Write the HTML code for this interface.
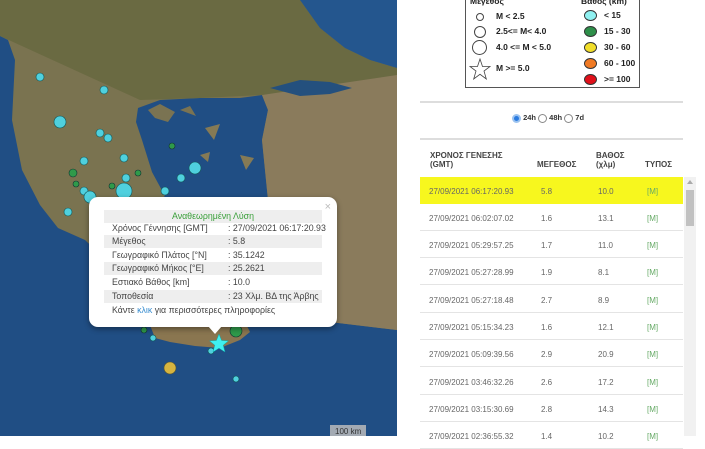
<!DOCTYPE html>
<html><head><meta charset="utf-8"><style>
*{margin:0;padding:0;box-sizing:border-box}
body{width:705px;height:436px;overflow:hidden;background:#fff;font-family:"Liberation Sans","DejaVu Sans",sans-serif;position:relative}
#map{position:absolute;left:0;top:0;width:397px;height:436px;overflow:hidden;background:#1d4a7e}
.pop{position:absolute;left:89px;top:197px;width:248px;height:130px;background:#fff;border-radius:9px;box-shadow:0 2px 6px rgba(0,0,0,.4);font-size:8.8px;color:#444;white-space:nowrap}
.pop .r{position:absolute;left:15px;width:218px;height:13px;line-height:13px}
.pop .g{background:#eee}
.pop .l{position:absolute;left:8px}
.pop .v{position:absolute;left:124px}
.tail{position:absolute;left:208px;top:326px;width:0;height:0;border-left:7px solid transparent;border-right:7px solid transparent;border-top:8px solid #fff}
.r2{position:absolute;font-size:8px;color:#555}
.row{position:absolute;left:420px;width:263px;height:27px;border-bottom:1px solid #e4e4e4;font-size:8px;color:#666}
.row span{position:absolute;top:10px}
</style></head><body>
<div id="map">
<svg width="397" height="436" viewBox="0 0 397 436">
<rect width="397" height="436" fill="#204e84"/>
<path d="M0 0H397V330L330 322L300 300L285 260L275 230L268 200L265 170L262 140L268 110L262 95L240 98L200 98L160 100L138 108L136 122L142 140L152 172L165 196L150 205L130 215L120 235L108 262L85 240L58 228L40 205L22 170L12 120L15 60L8 40L0 36Z" fill="#7a7350"/>
<path d="M262 95L397 70L397 330L330 322L300 300L285 260L275 230L268 200L265 170L262 140L268 110Z" fill="#8a7b5c"/>
<path d="M0 0H300L320 28L345 48L370 60L397 68V75L262 95L200 98L140 100L0 36Z" fill="#6a6a42"/>
<path d="M300 0H397V68L370 60L345 48L320 28Z" fill="#24568e"/>
<path d="M270 88L300 80L330 82L352 88L330 94L300 96Z" fill="#24507e"/>
<path d="M148 110L160 104L175 112L168 122L155 118Z M180 110L190 106L196 116Z" fill="#7a7352"/>
<path d="M205 128L220 124L214 140Z M240 155L254 158L246 170Z M200 155L210 152L208 162Z" fill="#857a55"/>
<path d="M150 325L175 318L200 320L225 318L245 322L250 332L240 340L220 348L195 346L170 342L155 338Z" fill="#8a7650"/>
<path d="M330 425H366V436H330Z" fill="#bbb" opacity=".85"/>
<text x="335" y="434" font-size="8" fill="#333" font-family="Liberation Sans">100 km</text>
<g stroke="#155" stroke-width=".6" fill="#4fd0de">
<circle cx="40" cy="77" r="4"/><circle cx="104" cy="90" r="4"/><circle cx="60" cy="122" r="6"/><circle cx="100" cy="133" r="4"/><circle cx="108" cy="138" r="4"/><circle cx="84" cy="161" r="4"/><circle cx="124" cy="158" r="4"/><circle cx="126" cy="178" r="4"/><circle cx="124" cy="191" r="8"/><circle cx="84" cy="191" r="4"/><circle cx="90" cy="197" r="6"/><circle cx="68" cy="212" r="4"/><circle cx="165" cy="191" r="4"/><circle cx="181" cy="178" r="4"/><circle cx="195" cy="168" r="6"/><circle cx="153" cy="338" r="3"/><circle cx="211" cy="351" r="3"/><circle cx="236" cy="379" r="3"/>
</g>
<g stroke="#133" stroke-width=".6" fill="#2f9a4a">
<circle cx="172" cy="146" r="3"/><circle cx="73" cy="173" r="4"/><circle cx="76" cy="184" r="3"/><circle cx="138" cy="173" r="3"/><circle cx="112" cy="186" r="3"/><circle cx="144" cy="330" r="3"/><circle cx="236" cy="331" r="6"/>
</g>
<circle cx="170" cy="368" r="6" fill="#d6b440" stroke="#553" stroke-width=".6"/>
<path d="M219 334L221.6 340.5L228.5 340.8L223.2 345.2L225 352L219 348.2L213 352L214.8 345.2L209.5 340.8L216.4 340.5Z" fill="#3ff0f0" stroke="#1aa" stroke-width=".5"/>
</svg>
<div class="pop">
<div style="position:absolute;right:6px;top:4px;color:#bbb;font-size:11px">×</div>
<div class="r g" style="top:13px;text-align:center;color:#3aa03a">Αναθεωρημένη Λύση</div>
<div class="r" style="top:25px"><span class="l">Χρόνος Γέννησης [GMT]</span><span class="v">: 27/09/2021 06:17:20.93</span></div>
<div class="r g" style="top:38px"><span class="l">Μέγεθος</span><span class="v">: 5.8</span></div>
<div class="r" style="top:52px"><span class="l">Γεωγραφικό Πλάτος [°N]</span><span class="v">: 35.1242</span></div>
<div class="r g" style="top:65px"><span class="l">Γεωγραφικό Μήκος [°E]</span><span class="v">: 25.2621</span></div>
<div class="r" style="top:79px"><span class="l">Εστιακό Βάθος [km]</span><span class="v">: 10.0</span></div>
<div class="r g" style="top:93px"><span class="l">Τοποθεσία</span><span class="v">: 23 Χλμ. ΒΔ της Άρβης</span></div>
<div class="r" style="top:107px"><span class="l">Κάντε <span style="color:#3a8ed0">κλικ</span> για περισσότερες πληροφορίες</span></div>
</div>
<div class="tail"></div>
</div>

<div style="position:absolute;left:465px;top:-2px;width:175px;height:90px;border:1.5px solid #555;font-size:8.5px;font-weight:bold;color:#222">
<div style="position:absolute;left:4px;top:-3px">Μέγεθος</div>
<div style="position:absolute;left:115px;top:-3px">Βάθος (km)</div>
<div style="position:absolute;left:10px;top:14px;width:8px;height:8px;border:1px solid #444;border-radius:50%"></div><div style="position:absolute;left:30px;top:12px">M &lt; 2.5</div>
<div style="position:absolute;left:8px;top:27px;width:12px;height:12px;border:1px solid #444;border-radius:50%"></div><div style="position:absolute;left:30px;top:27px">2.5&lt;= M&lt; 4.0</div>
<div style="position:absolute;left:6px;top:41px;width:15px;height:15px;border:1px solid #444;border-radius:50%"></div><div style="position:absolute;left:30px;top:43px">4.0 &lt;= M &lt; 5.0</div>
<svg style="position:absolute;left:3px;top:59px" width="22" height="22" viewBox="0 0 22 22"><path d="M11 1L13.5 8.5H21L15 13L17.3 21L11 16.3L4.7 21L7 13L1 8.5H8.5Z" fill="none" stroke="#444" stroke-width=".8"/></svg><div style="position:absolute;left:30px;top:64px">M &gt;= 5.0</div>
<div style="position:absolute;left:118px;top:11px;width:13px;height:11px;border-radius:50%;background:#8ff0f0;border:1px solid #333"></div><div style="position:absolute;left:138px;top:11px">&lt; 15</div>
<div style="position:absolute;left:118px;top:27px;width:13px;height:11px;border-radius:50%;background:#2e8f4a;border:1px solid #333"></div><div style="position:absolute;left:138px;top:27px">15 - 30</div>
<div style="position:absolute;left:118px;top:43px;width:13px;height:11px;border-radius:50%;background:#f1de2a;border:1px solid #333"></div><div style="position:absolute;left:138px;top:43px">30 - 60</div>
<div style="position:absolute;left:118px;top:59px;width:13px;height:11px;border-radius:50%;background:#f07a24;border:1px solid #333"></div><div style="position:absolute;left:138px;top:59px">60 - 100</div>
<div style="position:absolute;left:118px;top:75px;width:13px;height:11px;border-radius:50%;background:#e0101a;border:1px solid #333"></div><div style="position:absolute;left:138px;top:75px">&gt;= 100</div>
</div>
<div style="position:absolute;left:420px;top:101px;width:263px;height:2px;background:#ddd"></div>
<div style="position:absolute;left:512px;top:113px;font-size:7.5px;font-weight:bold;color:#333;line-height:10px">
<span style="display:inline-block;width:9px;height:9px;border-radius:50%;background:#2a7be0;border:2px solid #9cc3f0;vertical-align:middle"></span> 24h <span style="display:inline-block;width:9px;height:9px;border-radius:50%;border:1px solid #888;vertical-align:middle"></span> 48h <span style="display:inline-block;width:9px;height:9px;border-radius:50%;border:1px solid #888;vertical-align:middle"></span> 7d</div>
<div style="position:absolute;left:420px;top:138px;width:263px;height:2px;background:#ddd"></div>
<div class="r2" style="left:430px;top:151px;font-weight:bold;color:#444;line-height:9px">ΧΡΟΝΟΣ ΓΕΝΕΣΗΣ<br>(GMT)</div>
<div class="r2" style="left:537px;top:160px;font-weight:bold;color:#444">ΜΕΓΕΘΟΣ</div>
<div class="r2" style="left:596px;top:151px;font-weight:bold;color:#444;line-height:9px">ΒΑΘΟΣ<br>(χλμ)</div>
<div class="r2" style="left:645px;top:160px;font-weight:bold;color:#444">ΤΥΠΟΣ</div>
<div class="row" style="top:177px;background:#f7f71e;border:none"><span style="left:9px">27/09/2021 06:17:20.93</span><span style="left:121px">5.8</span><span style="left:178px">10.0</span><span style="left:227px;color:#6a6">[M]</span></div>
<div class="row" style="top:204px"><span style="left:9px">27/09/2021 06:02:07.02</span><span style="left:121px">1.6</span><span style="left:178px">13.1</span><span style="left:227px;color:#6a6">[M]</span></div>
<div class="row" style="top:231px"><span style="left:9px">27/09/2021 05:29:57.25</span><span style="left:121px">1.7</span><span style="left:178px">11.0</span><span style="left:227px;color:#6a6">[M]</span></div>
<div class="row" style="top:258px"><span style="left:9px">27/09/2021 05:27:28.99</span><span style="left:121px">1.9</span><span style="left:178px">8.1</span><span style="left:227px;color:#6a6">[M]</span></div>
<div class="row" style="top:286px"><span style="left:9px">27/09/2021 05:27:18.48</span><span style="left:121px">2.7</span><span style="left:178px">8.9</span><span style="left:227px;color:#6a6">[M]</span></div>
<div class="row" style="top:313px"><span style="left:9px">27/09/2021 05:15:34.23</span><span style="left:121px">1.6</span><span style="left:178px">12.1</span><span style="left:227px;color:#6a6">[M]</span></div>
<div class="row" style="top:340px"><span style="left:9px">27/09/2021 05:09:39.56</span><span style="left:121px">2.9</span><span style="left:178px">20.9</span><span style="left:227px;color:#6a6">[M]</span></div>
<div class="row" style="top:368px"><span style="left:9px">27/09/2021 03:46:32.26</span><span style="left:121px">2.6</span><span style="left:178px">17.2</span><span style="left:227px;color:#6a6">[M]</span></div>
<div class="row" style="top:395px"><span style="left:9px">27/09/2021 03:15:30.69</span><span style="left:121px">2.8</span><span style="left:178px">14.3</span><span style="left:227px;color:#6a6">[M]</span></div>
<div class="row" style="top:422px"><span style="left:9px">27/09/2021 02:36:55.32</span><span style="left:121px">1.4</span><span style="left:178px">10.2</span><span style="left:227px;color:#6a6">[M]</span></div>
<div style="position:absolute;left:684px;top:177px;width:12px;height:259px;background:#f1f1f1"></div>
<div style="position:absolute;left:686px;top:190px;width:8px;height:36px;background:#c1c1c1"></div>
<div style="position:absolute;left:687px;top:180px;width:0;height:0;border-left:3px solid transparent;border-right:3px solid transparent;border-bottom:4px solid #aaa"></div>
</body></html>
